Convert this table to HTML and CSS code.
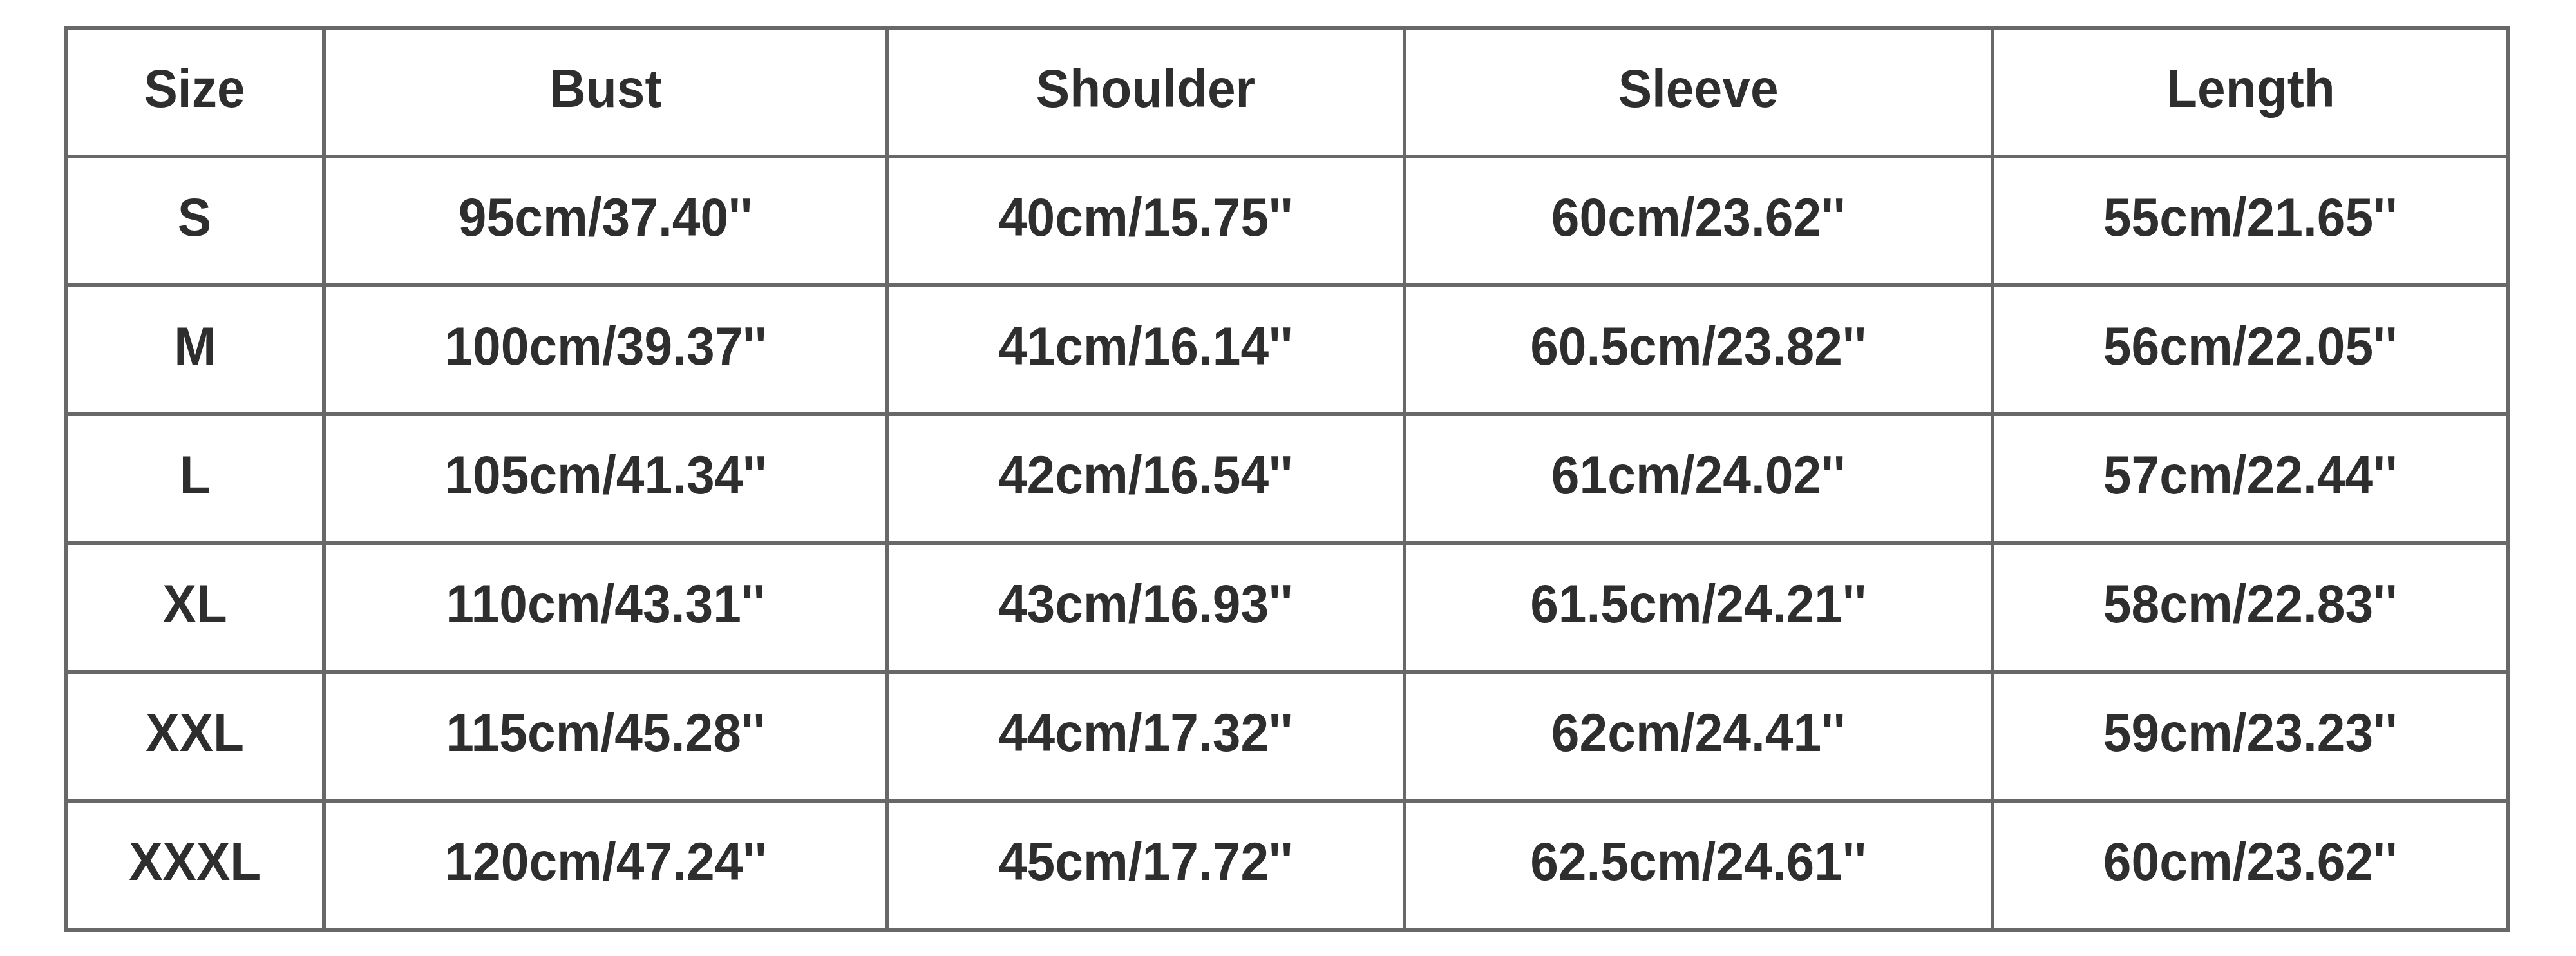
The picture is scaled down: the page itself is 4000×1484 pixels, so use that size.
FILE: index.html
```html
<!DOCTYPE html>
<html lang="en">
<head>
<meta charset="utf-8">
<title>Size Chart</title>
<link rel="stylesheet" href="styles.css">
</head>
<body>
<div class="chart">
  <div class="cell"><span>Size</span></div>
  <div class="cell"><span>Bust</span></div>
  <div class="cell"><span>Shoulder</span></div>
  <div class="cell"><span>Sleeve</span></div>
  <div class="cell"><span>Length</span></div>

  <div class="cell"><span>S</span></div>
  <div class="cell"><span>95cm/37.40''</span></div>
  <div class="cell"><span>40cm/15.75''</span></div>
  <div class="cell"><span>60cm/23.62''</span></div>
  <div class="cell"><span>55cm/21.65''</span></div>

  <div class="cell"><span>M</span></div>
  <div class="cell"><span>100cm/39.37''</span></div>
  <div class="cell"><span>41cm/16.14''</span></div>
  <div class="cell"><span>60.5cm/23.82''</span></div>
  <div class="cell"><span>56cm/22.05''</span></div>

  <div class="cell"><span>L</span></div>
  <div class="cell"><span>105cm/41.34''</span></div>
  <div class="cell"><span>42cm/16.54''</span></div>
  <div class="cell"><span>61cm/24.02''</span></div>
  <div class="cell"><span>57cm/22.44''</span></div>

  <div class="cell"><span>XL</span></div>
  <div class="cell"><span>110cm/43.31''</span></div>
  <div class="cell"><span>43cm/16.93''</span></div>
  <div class="cell"><span>61.5cm/24.21''</span></div>
  <div class="cell"><span>58cm/22.83''</span></div>

  <div class="cell"><span>XXL</span></div>
  <div class="cell"><span>115cm/45.28''</span></div>
  <div class="cell"><span>44cm/17.32''</span></div>
  <div class="cell"><span>62cm/24.41''</span></div>
  <div class="cell"><span>59cm/23.23''</span></div>

  <div class="cell"><span>XXXL</span></div>
  <div class="cell"><span>120cm/47.24''</span></div>
  <div class="cell"><span>45cm/17.72''</span></div>
  <div class="cell"><span>62.5cm/24.61''</span></div>
  <div class="cell"><span>60cm/23.62''</span></div>
</div>
</body>
</html>
```
FILE: styles.css
```css
html, body {
  margin: 0;
  padding: 0;
  background: #ffffff;
}

body {
  padding: 40px 0 0 99px;
  font-family: "Liberation Sans", Arial, sans-serif;
}

.chart {
  display: grid;
  grid-template-columns: 395px 869px 797px 907px 795px;
  grid-auto-rows: 194px;
  gap: 6px;
  padding: 6px;
  width: max-content;
  background: #686868;
}

.cell {
  background: #ffffff;
  display: flex;
  align-items: center;
  justify-content: center;
  padding-bottom: 12px;
  box-sizing: border-box;
}

.cell span {
  display: inline-block;
  font-size: 84px;
  font-weight: bold;
  color: #2e2e2e;
  white-space: nowrap;
  transform: scaleX(0.935);
}
```
